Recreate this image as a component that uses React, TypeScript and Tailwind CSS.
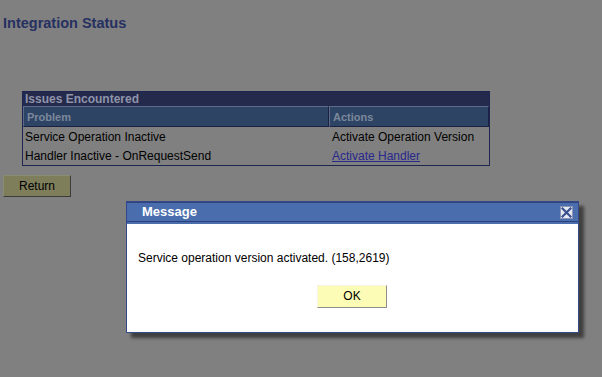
import React from "react";

export default function App() {
  return (
    <div
      className="relative w-[602px] h-[377px] overflow-hidden bg-[#808080]"
      style={{ fontFamily: '"Liberation Sans", Arial, sans-serif' }}
    >
      <div className="pt-[15px] pl-[3px] text-[14.5px] leading-[16px] font-bold text-[#263060]">
        Integration Status
      </div>

      <div className="ml-[22px] mt-[60px] w-[468px] border border-[#1d2550]">
        <div className="h-[14px] bg-[#242a4b] pl-[2px] text-[12px] leading-[14px] font-bold text-[#8f94aa]">
          Issues Encountered
        </div>
        <div className="flex h-[21px] bg-[#2e4464] text-[11px] font-bold text-[#7b889c]">
          <div className="w-[306px] border-t border-l border-t-[#5c6c88] border-l-[#5c6c88] border-b border-r border-b-[#1a2142] border-r-[#1a2142] pl-[3px] leading-[20px]">
            Problem
          </div>
          <div className="flex-1 border-t border-l border-t-[#5c6c88] border-l-[#5c6c88] border-b border-r border-b-[#1a2142] border-r-[#1a2142] pl-[3px] leading-[20px]">
            Actions
          </div>
        </div>
        <div className="flex h-[19px] pt-[2px] text-[12px] leading-[17px] text-black">
          <div className="w-[306px] pl-[2px]">Service Operation Inactive</div>
          <div className="flex-1 pl-[3px]">Activate Operation Version</div>
        </div>
        <div className="flex h-[19px] pt-[2px] text-[12px] leading-[17px] text-black">
          <div className="w-[306px] pl-[2px]">Handler Inactive - OnRequestSend</div>
          <div className="flex-1 pl-[3px]">
            <span className="underline text-[#28288e]">Activate Handler</span>
          </div>
        </div>
      </div>

      <div className="ml-[3px] mt-[9px] w-[68px] h-[22px] bg-[#7e7e5b] border border-t-[#8c8c72] border-l-[#8c8c72] border-b-[#3c3c3c] border-r-[#3c3c3c] text-[12px] leading-[20px] text-center text-black">
        Return
      </div>

      <div className="absolute left-[126px] top-[201px] w-[453px] h-[132px] border border-[#34498a] bg-white shadow-[5px_5px_3px_rgba(0,0,0,0.5)] flex flex-col">
        <div className="h-px bg-[#2e4380]" />
        <div className="flex h-[18px] items-center justify-between bg-[#4a6ead] pl-[15px] pr-[5px]">
          <span className="text-[13px] leading-[18px] font-bold text-white">Message</span>
          <div className="mt-[1px] flex h-[13px] w-[13px] items-center justify-center border border-[#8a94b4] bg-[#e6e9f2]">
            <svg width="11" height="11" viewBox="0 0 11 11">
              <path d="M1.5 1.5 L9.5 9.5 M9.5 1.5 L1.5 9.5" stroke="#3a4f8e" strokeWidth="2.2" strokeLinecap="square" />
            </svg>
          </div>
        </div>
        <div className="h-px bg-[#2b3f7a]" />
        <div className="h-[2px] bg-[#4a6ead]" />
        <div className="flex flex-1 flex-col">
          <div className="mt-[27px] pl-[11px] text-[12px] leading-[14px] text-black">
            Service operation version activated. (158,2619)
          </div>
          <div className="mt-[20px] flex justify-center">
            <div className="ml-[-1px] h-[23px] w-[70px] border border-t-[#f4f4e0] border-l-[#f4f4e0] border-b-[#8e8e8e] border-r-[#8e8e8e] bg-[#fcfcb6] text-center text-[12px] leading-[21px] text-black">
              OK
            </div>
          </div>
        </div>
      </div>
    </div>
  );
}
